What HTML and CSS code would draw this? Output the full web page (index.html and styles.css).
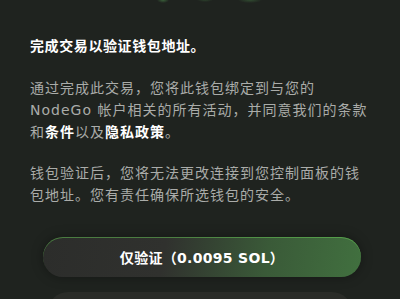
FILE: index.html
```html
<!DOCTYPE html>
<html lang="zh-CN">
<head>
  <meta charset="UTF-8">
  <meta name="viewport" content="width=device-width, initial-scale=1.0">
  <title>NodeGo 钱包验证</title>
  <link rel="stylesheet" href="styles.css">
</head>
<body>

  <div class="top-glow"></div>

  <div class="content">
    <h2 class="title">完成交易以验证钱包地址。</h2>

    <p class="text">
      通过完成此交易，您将此钱包绑定到与您的 NodeGo 帐户相关的所有活动，并同意我们的条款和<b>条件</b>以及<b>隐私政策</b>。
    </p>

    <p class="text">
      钱包验证后，您将无法更改连接到您控制面板的钱包地址。您有责任确保所选钱包的安全。
    </p>
  </div>

  <div class="actions">
    <button class="btn btn-verify">仅验证（0.0095 SOL）</button>
    <button class="btn btn-second"></button>
  </div>

</body>
</html>
```

FILE: styles.css
```css
* {
  margin: 0;
  padding: 0;
  box-sizing: border-box;
}

body {
  font-family: "DejaVu Sans", "Noto Sans CJK SC", sans-serif;
  background-color: #1f231f;
  color: #aaaca9;
  height: 100vh;
  overflow: hidden;
}

.top-glow {
  height: 6px;
  background:
    radial-gradient(ellipse 6px 3px at 163px 0, rgba(90, 170, 90, 0.45), transparent),
    radial-gradient(ellipse 8px 2px at 205px 0, rgba(70, 130, 70, 0.3), transparent),
    radial-gradient(ellipse 12px 3px at 250px 0, rgba(80, 150, 80, 0.35), transparent);
}

.content {
  padding: 29px 30px 0;
}

.title {
  font-size: 14px;
  font-weight: bold;
  color: #ffffff;
  letter-spacing: 0.6px;
  line-height: 22px;
}

.text {
  font-size: 14px;
  line-height: 22px;
  letter-spacing: 1px;
  margin-top: 20px;
}

.text + .text {
  margin-top: 19px;
}

.text b {
  color: #ffffff;
}

.actions {
  display: flex;
  flex-direction: column;
  align-items: center;
  gap: 15px;
  margin-top: 31px;
}

.btn {
  border: none;
  font-family: inherit;
  color: #ffffff;
  font-size: 14px;
  font-weight: bold;
  border-radius: 20px;
}

.btn-verify {
  width: 318px;
  height: 40px;
  margin-left: 4px;
  letter-spacing: 0.3px;
  background: linear-gradient(100deg, #2c2d2b 0%, #30312e 38%, #3a5a38 70%, #41703f 100%);
  box-shadow: inset 0 1px 0 rgba(110, 220, 90, 0.45), 0 0 12px rgba(0, 0, 0, 0.35);
}

.btn-second {
  width: 304px;
  height: 40px;
  background-color: #2a2c28;
}
```
